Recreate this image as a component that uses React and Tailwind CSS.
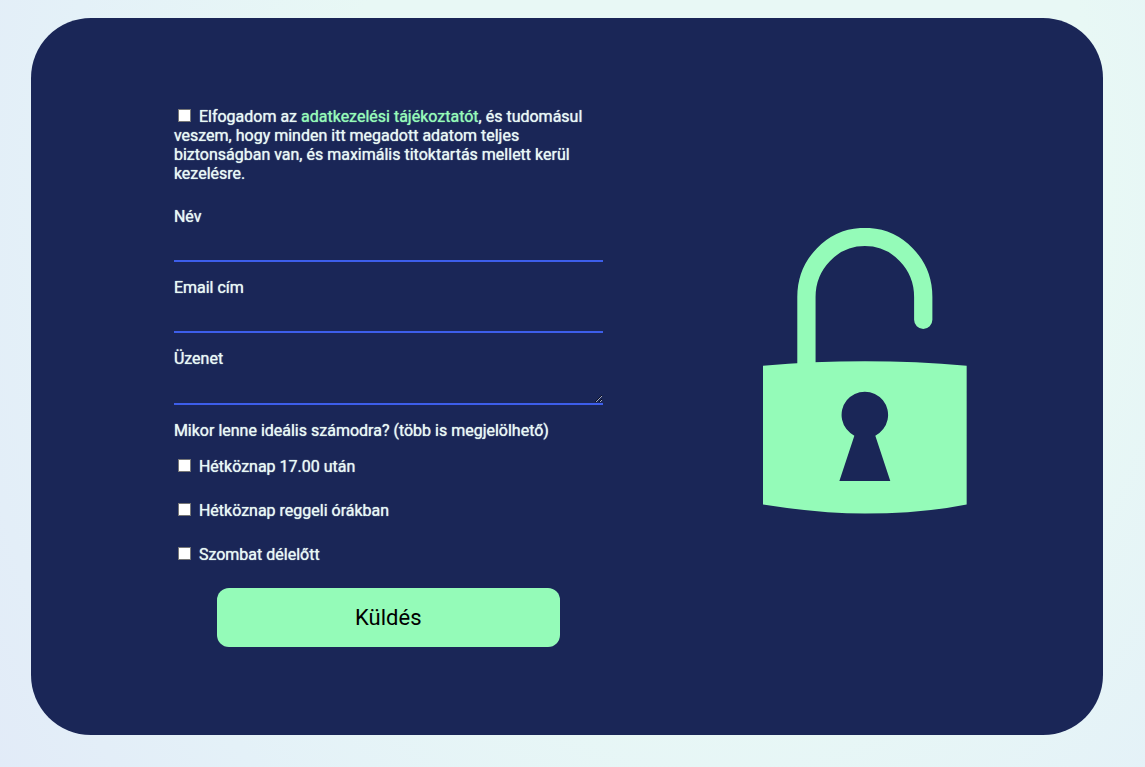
const fieldClass =
  'block w-full border-0 border-b-2 border-[#3d5eea] bg-transparent px-1 text-base text-[#e8f8f5] outline-none';

const times = [
  { id: 'evening', label: 'Hétköznap 17.00 után' },
  { id: 'morning', label: 'Hétköznap reggeli órákban' },
  { id: 'saturday', label: 'Szombat délelőtt' },
];

function Checkbox({ id }) {
  return (
    <input
      id={id}
      name={id}
      type="checkbox"
      className="ml-1 mr-2 inline-block size-[13px] appearance-none border border-[#767676] bg-white align-baseline checked:bg-[#3d5eea]"
    />
  );
}

function Padlock() {
  return (
    <svg viewBox="0 0 204 287" className="block w-full" aria-hidden="true">
      <path
        d="M43.5 144V69A58.5 60 0 0 1 160.5 69V92"
        fill="none"
        stroke="#94fbb8"
        strokeWidth="18.3"
        strokeLinecap="round"
      />
      <path
        fillRule="evenodd"
        fill="#94fbb8"
        d="M0 138Q102 129 204 138V277Q159 286 102 286Q57 286 0 277ZM91.5 208L76.5 253.5H127.5L112.5 208A23.3 23.3 0 1 0 91.5 208Z"
      />
    </svg>
  );
}

export default function App() {
  return (
    <main className="min-h-screen bg-[radial-gradient(70%_130%_at_63%_25%,#e8f8f5_0%,#e8f8f5_48%,#e4f1f8_82%,#e2ebf8_108%)] pt-[18px] pr-[42px] pb-8 pl-[31px] font-['Roboto',sans-serif]">
      <section className="flex items-start rounded-[60px] bg-[#1a2657] pt-[89px] pb-[88px] text-base leading-[19px] text-[#e8f8f5]">
        <form
          className="ml-[13.33%] w-[40%] shrink-0 text-shadow-[0_0_1px_currentColor]"
          onSubmit={(e) => e.preventDefault()}
        >
          <label htmlFor="consent" className="block">
            <Checkbox id="consent" />
            Elfogadom az{' '}
            <a href="#adatkezeles" className="text-[#94fbb8]">
              adatkezelési tájékoztatót
            </a>
            , és tudomásul veszem, hogy minden itt megadott adatom teljes biztonságban van, és
            maximális titoktartás mellett kerül kezelésre.
          </label>
          <label htmlFor="name" className="mt-6 block">
            Név
          </label>
          <input id="name" name="name" type="text" className={`${fieldClass} h-9`} />
          <label htmlFor="email" className="mt-4 block">
            Email cím
          </label>
          <input id="email" name="email" type="email" className={`${fieldClass} h-9`} />
          <label htmlFor="message" className="mt-4 block">
            Üzenet
          </label>
          <textarea
            id="message"
            name="message"
            rows={1}
            className={`${fieldClass} h-[37px] resize-y`}
          />
          <fieldset>
            <legend className="pt-4">Mikor lenne ideális számodra? (több is megjelölhető)</legend>
            <div className="mt-[17px] flex flex-col gap-[25px]">
              {times.map((t) => (
                <div key={t.id}>
                  <Checkbox id={t.id} />
                  <label htmlFor={t.id}>{t.label}</label>
                </div>
              ))}
            </div>
          </fieldset>
          <button
            type="submit"
            className="mx-auto mt-6 block h-[59px] w-4/5 rounded-xl bg-[#94fbb8] text-[22px] text-black text-shadow-none"
          >
            Küldés
          </button>
        </form>
        <div className="mt-[121px] ml-[15%] w-[19%]">
          <Padlock />
        </div>
      </section>
    </main>
  );
}
